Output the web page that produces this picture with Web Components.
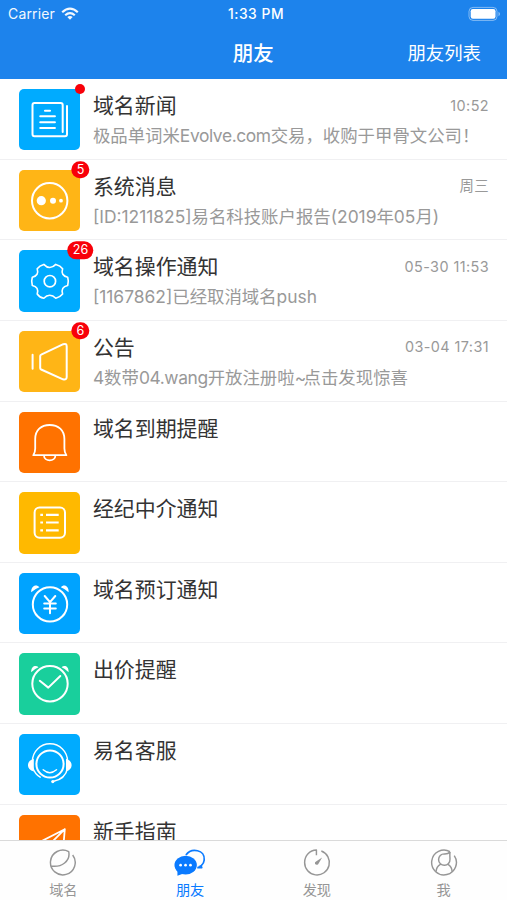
<!DOCTYPE html>
<html lang="zh-CN">
<head>
<meta charset="utf-8">
<title>朋友</title>
<style>
body{margin:0;background:#fff;font-family:Inter,"Noto Sans CJK SC",sans-serif}
</style>
</head>
<body>
<friends-app></friends-app>
<script>
const define=(name,cls)=>customElements.define(name,cls);

/* Tile artwork, drawn in a 61.3 unit square */
const TILES={
news:'<path d="M43.7 43V16a2 2 0 0 0-2-2H15.5a2 2 0 0 0-2 2v29.3a2 2 0 0 0 2 2H46a2 2 0 0 0 2-2V17"/><path stroke-width="2.1" d="M26 21.7h5M21.3 27.3h14.6M21.3 33.2h14.6M21.3 39h14.6"/>',
dots:'<circle cx="30.7" cy="30.7" r="17.7"/><g fill="#fff" stroke="none"><circle cx="22.3" cy="30.7" r="4.6"/><circle cx="34" cy="30.7" r="3"/><circle cx="42" cy="30.7" r="1.9"/></g>',
gear:'<path stroke-width="1.6" d="M24.8 14.4C28.5 18.5 33 18.5 36.8 14.4Q41.4 15.6 43.6 18.7C42.2 23.2 43.8 26.2 48.7 27.2Q50 31.3 48.7 35.5C43.8 36.5 42.2 39.5 43.6 44Q41 47.2 36.8 48.3C33 44.2 28.5 44.2 24.8 48.3Q20.2 47.2 18.2 44C19.6 39.5 18 36.5 13.3 35.5Q12 31.3 13.3 27.2C18 26.2 19.6 23.2 18.2 18.7Q20.5 15.6 24.8 14.4Z"/><circle cx="30.9" cy="31.2" r="5.7" stroke-width="1.7"/>',
horn:'<path d="M13.6 23.8v14M21.2 25v12Q21.2 38 22.2 38.5L44 48.3Q47.7 49.3 47.7 46V15.5Q47.7 12 44.3 13.2L22.2 23.6Q21.2 24 21.2 25Z"/>',
bell:'<path stroke-width="1.8" d="M14.3 43.2H47.4Q45.4 40.5 45.4 36.5V27C45.4 18 39.3 13 30.7 13S16.2 18 16.2 27V36.5Q16.2 40.5 14.3 43.2ZM25 43.5c0 6.4 11.4 6.4 11.4 0"/>',
list:'<rect x="15.6" y="15.6" width="30.4" height="30.2" rx="5"/><path stroke-width="2.2" stroke-linecap="butt" d="M27 22.8h12.7M27 30.5h12.7M27 38.4h12.7M21.3 22.8h2.7M21.3 30.5h2.7M21.3 38.4h2.7"/>',
yen:'<circle cx="31" cy="31.4" r="17.2" stroke-width="2"/><path fill="#fff" stroke="none" d="M12.2 19.2C12 13 17 10.8 20.5 14.2Q15.5 16 12.2 19.2ZM41.8 14.2C45 10.8 50 13 49.6 19.2Q46.5 16 41.8 14.2Z"/><path stroke-width="2" d="M25.7 23l5.3 6.2 5.3-6.2M31 29.2v11M25.2 30.4h11.6M25.2 35.4h11.6"/>',
check:'<circle cx="31" cy="30.8" r="17.7"/><path fill="#fff" stroke="none" d="M12.2 19.2C12 13 17 11.8 19.5 14.3Q15.5 16 12.2 19.2ZM42.6 14.3C45 11.8 50 13 49.6 19.2Q46.5 16 42.6 14.3Z"/><path stroke-width="2" d="M20.8 27.8l8.5 6.8 12-11.6"/>',
service:'<circle cx="31" cy="30" r="13.6"/><path stroke-width="1.4" d="M13.4 27.4a17.6 17.6 0 0 1 35.2 0M13.6 33.4Q16 40 21.2 43.2M48.6 34c-1.5 8-6.8 12-14.6 13.5M24.2 35.8q6.5 5.8 13.3 0"/><circle cx="33.8" cy="47.6" r="1.6" fill="#fff" stroke="none"/><path fill="#fff" stroke="none" d="M14.8 24.8v12.6C7 35.5 7 27 14.8 24.8ZM47 24.8v12.6C54.5 35.5 54.5 27 47 24.8Z"/>',
plane:'<path stroke-width="1.8" d="M45.8 14.2L15 30l10 5 20.8-20.8-2 24-12-5"/>'
};
const TABS={
domain:'<path d="M25 7.2A12.8 12.8 0 1 1 20.9 3.7C23 13.5 13.5 20.3 2.8 18.7"/>',
friends:'<path stroke-width="1.8" d="M11.8 7.2C17.5-.8 31.8 1.8 30.7 12.4c-.2 2.7-1.5 4.6-3.2 6.2l.5 1.8-4.5-.2"/><ellipse cx="11.5" cy="17.7" rx="11.6" ry="9.7" fill="currentColor" stroke="none"/><path fill="currentColor" stroke="none" d="M3 23v5.8l7-2.6ZM24 19l4.7 1.7-.4-3.5Z"/><g fill="#fff" stroke="none"><circle cx="6.3" cy="17.8" r="1.4"/><circle cx="11.4" cy="17.8" r="1.4"/><circle cx="16.5" cy="17.8" r="1.4"/></g>',
discover:'<path d="M14.4 7.5V2.1C7.5 2.3 2.2 7.8 2.2 15A12.8 12.8 0 1 0 19.5 3.1"/><path fill="currentColor" stroke="none" d="M20.3 9.7L16.2 16.8Q14.5 18.2 13 16.6Q12.3 15 14 14Z"/>',
me:'<path d="M21.2 3.8A12.8 12.8 0 1 0 25.6 7.8"/><path d="M21.4 4C20.6 6 21.2 8 21.2 11.7a5.9 5.9 0 1 1-5.9-5.6Q19 6.3 21.4 4M11.2 17Q7 19.5 6.8 24.6M19.2 17Q23.2 19.5 23.4 24.5"/>'
};

define('status-bar',class extends HTMLElement{
  constructor(){super();this.attachShadow({mode:'open'}).innerHTML=`
<style>
:host{display:grid;grid-template-columns:1fr auto 1fr;align-items:center;height:27px;padding:0 6px 0 8px;color:#fff;font-size:14px;box-sizing:border-box}
.left{display:flex;align-items:center;gap:6px;letter-spacing:.15px;opacity:.95}
.time{font-weight:500;font-size:13.8px;letter-spacing:.55px;padding-left:3px}
.battery{justify-self:end}
svg{display:block}
</style>
<div class="left"><span>Carrier</span><svg width="18" height="14" viewBox="0 0 18 14" fill="none" stroke="#fff" stroke-width="2.2"><path d="M1.2 5.2Q9-2 16.8 5.2M4.2 8.3Q9 4 13.8 8.3"/><path d="M9 12.8L6.3 10Q9 7.8 11.7 10Z" fill="#fff" stroke="none"/></svg></div>
<div class="time">1:33 PM</div>
<svg class="battery" width="33" height="16" viewBox="0 0 33 16"><rect x="1" y="1.4" width="28" height="13" rx="4" fill="none" stroke="#fff" stroke-opacity=".45"/><rect x="2.7" y="3.1" width="24.8" height="9.6" rx="2.2" fill="#fff"/><path d="M30.5 5.8q3 2 0 4.4z" fill="#fff" opacity=".5"/></svg>`}
});

define('nav-bar',class extends HTMLElement{
  constructor(){super();this.attachShadow({mode:'open'}).innerHTML=`
<style>
:host{display:grid;grid-template-columns:1fr auto 1fr;align-items:center;height:52px;padding:0 26px 3px 25.5px;color:#fff;box-sizing:border-box}
.title{grid-column:2;font-size:20.5px;font-weight:500}
.action{justify-self:end;font-size:18.4px;font-weight:400}
</style><div class="title"><slot></slot></div><div class="action"><slot name="action"></slot></div>`}
});

define('icon-tile',class extends HTMLElement{
  constructor(){super();this.attachShadow({mode:'open'})}
  connectedCallback(){this.shadowRoot.innerHTML=`
<style>
:host{display:block;width:61.3px;height:61.3px;border-radius:5px;position:relative;flex:none;background:${this.getAttribute('color')}}
svg{display:block;width:100%;height:100%}
.badge{position:absolute;top:0;left:100%;transform:translate(-50%,-50%);min-width:17.4px;height:17.4px;padding:0 4px;box-sizing:border-box;border-radius:9px;background:#f80009;color:#fff;font-size:12.6px;line-height:17.4px;text-align:center}
.badge.wide{padding:0 5px}
.badge.dot{min-width:0;width:10px;height:10px;padding:0}
</style>
<svg viewBox="0 0 61.3 61.3" fill="none" stroke="#fff" stroke-width="2" stroke-linecap="round" stroke-linejoin="round">${TILES[this.getAttribute('icon')]}</svg>
${this.hasAttribute('badge')?`<span class="badge ${this.getAttribute('badge')===''?'dot':this.getAttribute('badge').length>1?'wide':''}">${this.getAttribute('badge')}</span>`:''}`}
});

define('message-row',class extends HTMLElement{
  constructor(){super();this.attachShadow({mode:'open'}).innerHTML=`
<style>
:host{display:flex;gap:12.4px;height:80.65px;box-sizing:border-box;padding:10px 18px 0 19.2px;border-bottom:1px solid #f0f0f2}
.body{flex:1;min-width:0;display:flex;flex-direction:column}
.head{display:flex;justify-content:space-between;align-items:center;height:33px}
.title{font-size:20.95px;color:#333;line-height:33px}
.time{font-size:14.4px;color:#999;letter-spacing:.42px;line-height:20px}
.text{font-size:17.4px;color:#999;line-height:28px;white-space:nowrap;font-weight:400}
</style>
<slot name="icon"></slot>
<div class="body"><div class="head"><span class="title"><slot></slot></span><span class="time"><slot name="time"></slot></span></div><div class="text"><slot name="text"></slot></div></div>`}
});

define('tab-item',class extends HTMLElement{
  constructor(){super();this.attachShadow({mode:'open'})}
  connectedCallback(){this.shadowRoot.innerHTML=`
<style>
:host{display:flex;flex-direction:column;align-items:center;flex:1;color:#969696;font-size:14.2px;line-height:20px;padding-top:7px}
:host([active]){color:#0a7aff}
svg{display:block;margin-bottom:3px}
</style>
<svg width="${this.hasAttribute('active')?32:30}" height="30" viewBox="0 0 ${this.hasAttribute('active')?32:30} 30" fill="none" stroke="currentColor" stroke-width="1.5" stroke-linejoin="round">${TABS[this.getAttribute('icon')]}</svg><slot></slot>`}
});

define('tab-bar',class extends HTMLElement{
  constructor(){super();this.attachShadow({mode:'open'}).innerHTML=`
<style>:host{display:flex;height:60px;box-sizing:border-box;border-top:1px solid #dadada;background:#fefefe}</style><slot></slot>`}
});

const rows=[
['news','#00abff','域名新闻','10:52','极品单词米<i class="tight">Evolve.com</i>交易，收购于甲骨文公司！',''],
['dots','#ffb516','系统消息','周三','[ID:1211825]易名科技账户报告(2019年05月)','5'],
['gear','#00abff','域名操作通知','05-30 11:53','[1167862]已经取消域名push','26'],
['horn','#ffb516','公告','03-04 17:31','4数带<i class="tight">04.wang</i>开放注册啦<i class="tilde">~</i>点击发现惊喜','6'],
['bell','#ff7200','域名到期提醒'],
['list','#ffb900','经纪中介通知'],
['yen','#00a3ff','域名预订通知'],
['check','#19cf9c','出价提醒'],
['service','#00abff','易名客服'],
['plane','#ff7200','新手指南']];

define('friends-app',class extends HTMLElement{
  constructor(){super();this.attachShadow({mode:'open'}).innerHTML=`
<style>
:host{display:grid;grid-template-rows:79px 761px 60px;height:900px;width:507px;overflow:hidden}
header{background:#1d83ec}
main{overflow:hidden}
i{font-style:normal}
.tight{letter-spacing:-.4px}
.tilde{letter-spacing:-2.6px}
</style>
<header><status-bar></status-bar><nav-bar>朋友<span slot="action">朋友列表</span></nav-bar></header>
<main>${rows.map(([ic,c,t,time,text,b])=>`<message-row><icon-tile slot="icon" icon="${ic}" color="${c}"${b!==undefined?` badge="${b}"`:''}></icon-tile>${t}${time?`<span slot="time">${time}</span><span slot="text">${text}</span>`:''}</message-row>`).join('')}</main>
<tab-bar><tab-item icon="domain">域名</tab-item><tab-item icon="friends" active>朋友</tab-item><tab-item icon="discover">发现</tab-item><tab-item icon="me">我</tab-item></tab-bar>`}
});
</script>
</body>
</html>
